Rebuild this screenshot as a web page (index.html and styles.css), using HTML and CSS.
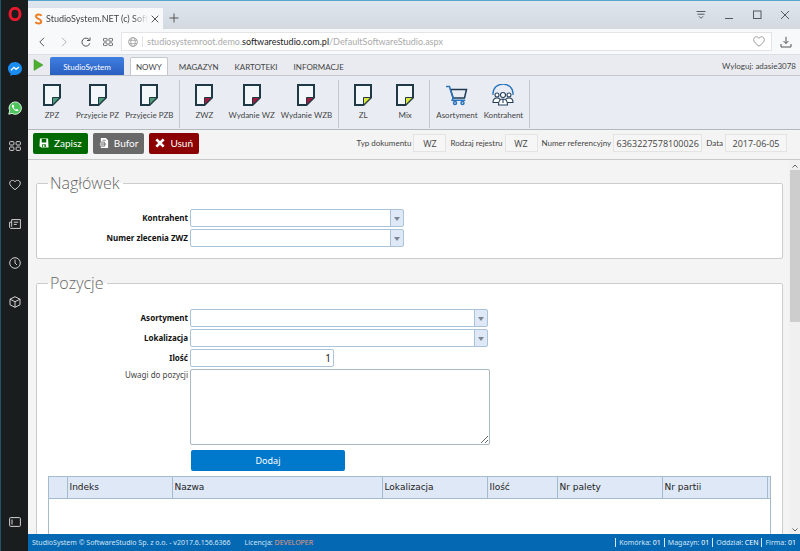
FILE: index.html
```
<!DOCTYPE html>
<html lang="pl">
<head>
    <meta charset="UTF-8">
    <meta name="viewport" content="width=device-width, initial-scale=1.0">
    <title>StudioSystem.NET (c) SoftwareStudio</title>
    <link rel="stylesheet" href="styles.css">
</head>
<body>
    <!-- Shared icon shapes -->
    <svg class="symbols" aria-hidden="true">
        <symbol id="doc" viewBox="0 0 18 22">
            <path class="doc-page" d="M1 1h16v12.500l-7.500 7.500H1z"/>
            <path class="doc-fold" d="M9.500 21v-7.500H17z"/>
        </symbol>
        <symbol id="tiles" viewBox="0 0 12 10">
            <rect x="0.6" y="0.6" width="4.3" height="3.4" rx="0.8"/>
            <rect x="7.1" y="0.6" width="4.3" height="3.4" rx="0.8"/>
            <rect x="0.6" y="6" width="4.3" height="3.4" rx="0.8"/>
            <rect x="7.1" y="6" width="4.3" height="3.4" rx="0.8"/>
        </symbol>
        <symbol id="heart" viewBox="0 0 12 11">
            <path d="M6 10.2C3 7.8.7 6 .7 3.7.7 2 1.900.8 3.400.8 4.500.8 5.500 1.400 6 2.300 6.500 1.400 7.500.8 8.600.8c1.500 0 2.700 1.200 2.700 2.900C11.300 6 9 7.800 6 10.200z"/>
        </symbol>
    </svg>

    <aside class="sidebar">
        <svg class="opera" viewBox="0 0 14 14"><ellipse cx="7" cy="7" rx="5" ry="5.700"/></svg>
        <svg class="messenger" viewBox="0 0 14 14"><path fill="#1a8df5" d="M7 0C3 0 0 2.900 0 6.600c0 2.100 1 3.900 2.500 5.100V14l2.200-1.200c.7.2 1.500.3 2.300.3 4 0 7-2.900 7-6.500S11 0 7 0z"/><path fill="none" stroke="#fff" stroke-width="1.300" d="M3 8.300l3-3 2 2 3-2.400"/></svg>
        <svg class="whatsapp" viewBox="0 0 14 14"><path fill="#4cc35b" stroke="#d9f2dc" stroke-width="1" d="M.8 13.200l.9-3.300A6.200 6.200 0 1 1 4 12.400z"/><path fill="#fff" d="M4.700 3.600c-1.200.8-1 2.700.9 4.700 2 2 3.900 2.500 4.800 1.300.4-.6.200-.9-1.600-1.700-.5 0-.6.800-1.100.7-.9-.3-1.900-1.300-2.100-2.100 0-.4.600-.6.600-1.100-.5-1.400-.9-2.100-1.500-1.800z"/></svg>
        <svg class="line-icon" viewBox="0 0 12 10"><use href="#tiles"/></svg>
        <svg class="line-icon" viewBox="0 0 12 11"><use href="#heart"/></svg>
        <svg class="line-icon" viewBox="0 0 12 10"><path d="M2.700.6h8.700v8.800H1.500L.6 8.500V3.200h2.100zM2.700 3.200v4.600M4.800 3.200h4.500M4.800 5.400h3"/></svg>
        <svg class="line-icon" viewBox="0 0 12 12"><circle cx="6" cy="6" r="5.300"/><path d="M6 2.600V6l2 2"/></svg>
        <svg class="line-icon" viewBox="0 0 12 12"><path d="M6 .7l5 2.500v5.600l-5 2.500-5-2.500V3.200zM1 3.200l5 2.500 5-2.500M6 5.700v5.600"/></svg>
        <svg class="line-icon panel-icon" viewBox="0 0 12 10"><rect x="0.600" y="0.600" width="10.800" height="8.800" rx="1"/><path d="M3 2.500v5"/></svg>
    </aside>

    <div class="window">
        <header class="tab-strip">
            <div class="browser-tab">
                <svg class="favicon" viewBox="0 0 8 12"><path d="M7 2.800C6 1 1.500.9 1.500 3.500S6.700 5.800 6.700 8.500 2 10.900 1 9"/></svg>
                <span class="tab-title">StudioSystem.NET (c) Soft</span>
                <svg class="tab-close" viewBox="0 0 8 8"><path d="M.7.700l6.600 6.600M7.300.7L.7 7.300"/></svg>
            </div>
            <svg class="new-tab" viewBox="0 0 10 10"><path d="M5 .5v9M.5 5h9"/></svg>
            <div class="window-controls">
                <svg viewBox="0 0 10 10"><path d="M.5 1.500h9M1.500 4.200h7M3 6.300l2 2 2-2"/></svg>
                <svg viewBox="0 0 10 10"><path d="M1 8.500h8"/></svg>
                <svg viewBox="0 0 10 10"><rect x="1.500" y="1" width="7.500" height="7.500"/></svg>
                <svg viewBox="0 0 10 10"><path d="M1 1l8 8M9 1L1 9"/></svg>
            </div>
        </header>

        <div class="address-row">
            <svg class="nav-icon" viewBox="0 0 10 10"><path d="M7 .8L2.800 5 7 9.200"/></svg>
            <svg class="nav-icon disabled" viewBox="0 0 10 10"><path d="M3 .8L7.200 5 3 9.200"/></svg>
            <svg class="nav-icon" viewBox="0 0 10 10"><path d="M8.800 6.200a4 4 0 1 1-.6-3.400M9 .5v3H6"/></svg>
            <svg class="nav-icon" viewBox="0 0 12 10"><use href="#tiles"/></svg>
            <div class="address-box">
                <svg class="globe" viewBox="0 0 10 10"><circle cx="5" cy="5" r="4.400"/><ellipse cx="5" cy="5" rx="2.200" ry="4.400"/><path d="M1 3.300h8M1 6.700h8"/></svg>
                <span class="url">studiosystemroot.demo.<b>softwarestudio.com.pl</b>/DefaultSoftwareStudio.aspx</span>
                <svg class="bookmark" viewBox="0 0 12 11"><use href="#heart"/></svg>
            </div>
            <svg class="nav-icon download" viewBox="0 0 12 12"><path d="M6 .8v6.700M3.500 5L6 7.500 8.500 5M1 8v3h10V8"/></svg>
        </div>

        <nav class="menu">
            <svg class="play" viewBox="0 0 10 12"><path d="M.5.500l9 5.500-9 5.500z"/></svg>
            <a class="home" href="#">StudioSystem</a>
            <a class="active" href="#">NOWY</a>
            <a href="#">MAGAZYN</a>
            <a href="#">KARTOTEKI</a>
            <a href="#">INFORMACJE</a>
            <a class="logout" href="#">Wyloguj: adasie3078</a>
        </nav>

        <div class="ribbon">
            <div class="ribbon-group">
                <button class="green"><svg><use href="#doc"/></svg>ZPZ</button>
                <button class="green"><svg><use href="#doc"/></svg>Przyjęcie PZ</button>
                <button class="green"><svg><use href="#doc"/></svg>Przyjęcie PZB</button>
            </div>
            <div class="ribbon-group">
                <button class="red"><svg><use href="#doc"/></svg>ZWZ</button>
                <button class="red"><svg><use href="#doc"/></svg>Wydanie WZ</button>
                <button class="red"><svg><use href="#doc"/></svg>Wydanie WZB</button>
            </div>
            <div class="ribbon-group">
                <button class="yellow"><svg><use href="#doc"/></svg>ZL</button>
                <button class="yellow"><svg><use href="#doc"/></svg>Mix</button>
            </div>
            <div class="ribbon-group">
                <button>
                    <svg viewBox="0 0 22 22"><g fill="none" stroke-width="1.500"><path stroke="#1c3a56" d="M4.500 5.500h16l-2 8.500H7.200z"/><path stroke="#2a74bd" d="M0 2.500h3.500L7 14l-.8 2.300h13"/><circle stroke="#2a74bd" cx="9" cy="19" r="1.500"/><circle stroke="#2a74bd" cx="16.500" cy="19" r="1.500"/></g></svg>
                    Asortyment
                </button>
                <button>
                    <svg viewBox="0 0 22 22"><path fill="none" stroke="#2a74bd" stroke-width="1.300" d="M1 11C0-3.500 22-3.500 21 11"/><g fill="#fff" stroke="#26405a" stroke-width="1.100"><circle cx="5" cy="11" r="2"/><circle cx="17" cy="11" r="2"/><path d="M1 18.500c0-3 1.500-4.500 4-4.500s4 1.500 4 4.500zM13 18.500c0-3 1.500-4.500 4-4.500s4 1.500 4 4.500z"/><circle cx="11" cy="11" r="2.500"/><path d="M6.500 21c0-4 1.500-6 4.500-6s4.500 2 4.500 6zM11 15v4"/></g></svg>
                    Kontrahent
                </button>
            </div>
        </div>

        <form class="document">
            <div class="toolbar">
                <button type="button" class="save"><svg viewBox="0 0 11 11"><path fill="#fff" fill-rule="evenodd" d="M1 .500h9l.5 10h-8L.500 9zM3 1v4h5V1zM3.500 7v3h4V7z"/><path fill="#fff" d="M4.500 7.500H6V10H4.500z"/></svg>Zapisz</button>
                <button type="button" class="buffer"><svg viewBox="0 0 11 11"><path fill="#fff" d="M2 0h5.500L10 2.500V11H2z"/><path fill="#ddd" stroke="#666" stroke-width=".8" d="M.8 4.500h5.500v4.500H.8z"/><path stroke="#666" stroke-width=".8" d="M4 2.500h3.500M2 6.700h6"/></svg>Bufor</button>
                <button type="button" class="delete"><svg viewBox="0 0 11 11"><path stroke="#fff" stroke-width="3" d="M1.500 1.500l8 8M9.500 1.500l-8 8"/></svg>Usuń</button>
                <div class="doc-info">
                    <label for="docType">Typ dokumentu</label>
                    <input id="docType" class="short" value="WZ" readonly>
                    <label for="registerType">Rodzaj rejestru</label>
                    <input id="registerType" class="short" value="WZ" readonly>
                    <label for="refNumber">Numer referencyjny</label>
                    <input id="refNumber" class="long" value="6363227578100026" readonly>
                    <label for="docDate">Data</label>
                    <input id="docDate" class="date" value="2017-06-05" readonly>
                </div>
            </div>

            <div class="scroll-area">
                <div class="content">
                    <fieldset>
                        <legend>Nagłówek</legend>
                        <div class="form-grid">
                            <label for="contractor">Kontrahent</label>
                            <div class="combo medium"><select id="contractor"><option></option></select></div>
                            <label for="orderNumber">Numer zlecenia ZWZ</label>
                            <div class="combo medium"><select id="orderNumber"><option></option></select></div>
                        </div>
                    </fieldset>

                    <fieldset>
                        <legend>Pozycje</legend>
                        <div class="form-grid">
                            <label for="product">Asortyment</label>
                            <div class="combo wide"><select id="product"><option></option></select></div>
                            <label for="location">Lokalizacja</label>
                            <div class="combo wide"><select id="location"><option></option></select></div>
                            <label for="quantity">Ilość</label>
                            <input id="quantity" class="quantity" value="1">
                            <label for="notes" class="optional">Uwagi do pozycji</label>
                            <textarea id="notes"></textarea>
                            <button type="button" class="add">Dodaj</button>
                        </div>

                        <!-- Document lines -->
                        <div class="table-wrap">
                            <table>
                                <colgroup>
                                    <col class="col-select"><col class="col-normal"><col class="col-name"><col class="col-normal"><col class="col-qty"><col class="col-normal"><col class="col-normal"><col>
                                </colgroup>
                                <thead>
                                    <tr><th></th><th>Indeks</th><th>Nazwa</th><th>Lokalizacja</th><th>Ilość</th><th>Nr palety</th><th>Nr partii</th><th></th></tr>
                                </thead>
                            </table>
                        </div>
                    </fieldset>
                </div>
                <div class="scrollbar">
                    <svg viewBox="0 0 8 6"><path d="M1.500 4.500L4 2l2.500 2.500"/></svg>
                    <div class="thumb"></div>
                    <svg class="down" viewBox="0 0 8 6"><path d="M1.500 1.500L4 4l2.500-2.500"/></svg>
                </div>
            </div>
        </form>

        <footer class="status">
            <span>StudioSystem © SoftwareStudio Sp. z o.o. - v2017.6.156.6366</span>
            <span>Licencja: <em>DEVELOPER</em></span>
            <ul>
                <li>Komórka: <b>01</b></li>
                <li>Magazyn: <b>01</b></li>
                <li>Oddział: <b>CEN</b></li>
                <li>Firma: <b>01</b></li>
            </ul>
        </footer>
    </div>
</body>
</html>
```
FILE: styles.css
```
* {
    margin: 0;
    padding: 0;
    box-sizing: border-box;
}
body {
    display: flex;
    height: 100vh;
    overflow: hidden;
    font-family: Lato, "Open Sans", sans-serif;
    font-size: 8px;
    color: #444;
    background-color: #f4f4f4;
}
svg {
    display: block;
    flex: none;
    fill: none;
}
a {
    color: inherit;
    text-decoration: none;
}
button,
input,
select,
textarea {
    font-family: inherit;
    color: inherit;
}
.symbols {
    position: absolute;
    width: 0;
    height: 0;
}

/* Browser sidebar */
.sidebar {
    flex: none;
    width: 28px;
    display: flex;
    flex-direction: column;
    align-items: center;
    gap: 27px;
    padding: 7px 0 23px;
    background-color: #1a1d1e;
    border-left: 1px solid #23546b;
}
.sidebar svg {
    width: 12px;
    height: 12px;
}
.sidebar .opera {
    width: 14px;
    height: 14px;
    margin-bottom: 14px;
    stroke: #e8182d;
    stroke-width: 3;
}
.sidebar .messenger,
.sidebar .whatsapp {
    width: 14px;
    height: 14px;
    margin-bottom: -2px;
}
.line-icon {
    stroke: #d0d2d3;
    stroke-width: 1;
}
.sidebar .panel-icon {
    margin-top: auto;
}

/* Browser window */
.window {
    flex: 1;
    min-width: 0;
    display: flex;
    flex-direction: column;
    border-top: 1px solid #5aa5cc;
}
.tab-strip {
    flex: none;
    display: flex;
    align-items: flex-end;
    height: 28px;
    padding-right: 10px;
    background: linear-gradient(#dfe6ef, #d3d9df);
}
.browser-tab {
    display: flex;
    align-items: center;
    gap: 3px;
    width: 135px;
    height: 21px;
    padding: 0 6px;
    background-color: #f8f9fb;
}
.favicon {
    width: 9px;
    height: 12px;
    stroke: #ee7d22;
    stroke-width: 2;
}
.tab-title {
    flex: 1;
    white-space: nowrap;
    font-size: 9px;
    mask-image: linear-gradient(to right, #000 85%, transparent);
}
.tab-close {
    width: 8px;
    height: 8px;
    stroke: #555;
}
.new-tab {
    width: 10px;
    height: 10px;
    margin: 0 0 6px 6px;
    stroke: #555;
}
.window-controls {
    display: flex;
    gap: 18px;
    margin: 0 0 9px auto;
    stroke: #555b63;
}
.window-controls svg {
    width: 10px;
    height: 10px;
}
.address-row {
    flex: none;
    display: flex;
    align-items: center;
    gap: 12px;
    height: 26px;
    padding: 0 8px 0 9px;
    background-color: #f8f9fb;
    border-bottom: 1px solid #dcdfe3;
}
.nav-icon {
    width: 10px;
    height: 10px;
    stroke: #555;
}
.nav-icon.disabled {
    stroke: #b5b5b5;
}
.nav-icon.download {
    width: 12px;
    height: 12px;
    margin-left: -4px;
}
.address-box {
    flex: 1;
    display: flex;
    align-items: center;
    height: 19px;
    margin-left: -4px;
    padding: 0 6px;
    background-color: #fff;
    border: 1px solid #e2e4e8;
}
.globe {
    width: 10px;
    height: 10px;
    stroke: #999;
    stroke-width: 0.8;
}
.url {
    margin-left: 4px;
    padding-left: 4px;
    border-left: 1px solid #e2e4e8;
    font-size: 9px;
    color: #aaa;
}
.url b {
    font-weight: normal;
    color: #222;
}
.bookmark {
    width: 12px;
    height: 11px;
    margin-left: auto;
    stroke: #999;
}

/* Application menu */
.menu {
    flex: none;
    display: flex;
    align-items: flex-end;
    gap: 6px;
    height: 21px;
    padding: 0 4px 0 5px;
    background-color: #e9ebf0;
    border-bottom: 1px solid #c4c7cb;
}
.menu a {
    height: 18px;
    padding: 0 5px;
    line-height: 20px;
}
.play {
    width: 11px;
    height: 12px;
    margin-bottom: 4px;
    fill: #4bb02e;
    stroke: #3a8f24;
    stroke-width: 0.5;
}
.menu .home {
    width: 74px;
    text-align: center;
    color: #fff;
    background: linear-gradient(#3f7fe0, #2a5fc0);
    border-radius: 2px 2px 0 0;
}
.menu .active {
    line-height: 18px;
    background-color: #fff;
    border: 1px solid #c4c7cb;
    border-bottom: none;
    border-radius: 2px 2px 0 0;
}
.menu .logout {
    margin-left: auto;
    padding: 0;
    line-height: 18px;
}

/* Ribbon */
.ribbon {
    flex: none;
    display: flex;
    height: 54px;
    padding: 4px 0 1px;
    background-color: #e9edf3;
    border-bottom: 1px solid #b5b8bc;
}
.ribbon-group {
    display: flex;
    gap: 2px;
    padding: 0 4px;
    border-right: 1px solid #c4c7cb;
}
.ribbon button {
    display: flex;
    flex-direction: column;
    align-items: center;
    gap: 3px;
    min-width: 40px;
    padding: 4px 2px;
    font-size: 8px;
    line-height: 12px;
    white-space: nowrap;
    background: none;
    border: none;
}
.ribbon svg {
    width: 22px;
    height: 22px;
}
.doc-page {
    fill: #f4f7fa;
    stroke: #1f3a44;
    stroke-width: 2;
}
.doc-fold {
    fill: currentColor;
    stroke: #1f3a44;
    stroke-width: 1;
}
.green use {
    color: #4f9b7b;
}
.red use {
    color: #a5193f;
}
.yellow use {
    color: #dfe63c;
}

/* Document form */
.document {
    flex: 1;
    min-height: 0;
    display: flex;
    flex-direction: column;
}
.toolbar {
    flex: none;
    display: flex;
    align-items: center;
    gap: 5px;
    height: 30px;
    padding: 0 13px 3px 5px;
    border-bottom: 1px solid #c8c8c8;
}
.toolbar button {
    display: flex;
    align-items: center;
    gap: 5px;
    height: 21px;
    padding: 0 6px;
    font-size: 10px;
    color: #fff;
    border: none;
    border-radius: 2px;
}
.toolbar button svg {
    width: 10px;
    height: 10px;
}
.toolbar .save {
    background-color: #006a00;
}
.toolbar .buffer {
    background-color: #696969;
}
.toolbar .delete {
    background-color: #8b0000;
}
.doc-info {
    display: flex;
    align-items: center;
    gap: 2px;
    margin-left: auto;
}
.doc-info input {
    height: 18px;
    margin-right: 2px;
    font-family: "Open Sans", sans-serif;
    font-size: 9px;
    text-align: center;
    background-color: #f6f6f6;
    border: 1px solid #e4e4e4;
}
.doc-info input:last-child {
    margin-right: 0;
}
.doc-info .short {
    width: 33px;
}
.doc-info .long {
    width: 89px;
}
.doc-info .date {
    width: 62px;
}
.scroll-area {
    flex: 1;
    min-height: 0;
    display: flex;
}
.content {
    flex: 1;
    min-width: 0;
    padding: 11px 6px 0 8px;
    overflow: hidden;
}
fieldset {
    margin-bottom: 12px;
    padding: 14px 11px 11px;
    background-color: #fff;
    border: 1px solid #ccc;
    border-radius: 2px;
}
fieldset:last-child {
    height: 400px;
}
legend {
    padding: 0 4px 0 2px;
    font-family: "Open Sans", sans-serif;
    font-size: 16px;
    font-weight: 300;
    line-height: 24px;
    color: #666;
}
.form-grid {
    display: grid;
    grid-template-columns: 140px 1fr;
    gap: 2px;
    justify-items: start;
    font-family: "Noto Sans", sans-serif;
}
.form-grid label {
    justify-self: end;
    font-weight: bold;
    line-height: 18px;
    color: #111;
}
.form-grid .optional {
    font-weight: normal;
    line-height: 12px;
    color: #444;
}
.combo {
    position: relative;
    height: 18px;
}
.combo.medium {
    width: 214px;
}
.combo.wide {
    width: 298px;
}
.combo select {
    width: 100%;
    height: 100%;
    appearance: none;
    background: linear-gradient(to left, #dfe8f6 12px, #a9c3d8 12px, #a9c3d8 13px, #fff 13px);
    border: 1px solid #a9c3d8;
    border-radius: 2px;
}
.combo::after {
    content: "";
    position: absolute;
    right: 4px;
    top: 8px;
    border: 3px solid transparent;
    border-top: 4px solid #7b8794;
    border-bottom: none;
    pointer-events: none;
}
.quantity {
    width: 144px;
    height: 18px;
    padding: 0 2px;
    font-size: 10px;
    text-align: right;
    color: #222;
    border: 1px solid #a9c3d8;
    border-radius: 2px;
}
textarea {
    width: 300px;
    height: 76px;
    border: 1px solid #a9b9c4;
    border-radius: 2px;
}
.add {
    grid-column: 2;
    width: 154px;
    height: 21px;
    margin: 3px 0 0 1px;
    font-size: 9px;
    color: #fff;
    background-color: #0078cc;
    border: none;
    border-radius: 2px;
}
.table-wrap {
    height: 200px;
    margin-top: 5px;
    border: 1px solid #a3bbcd;
}
table {
    width: 100%;
    table-layout: fixed;
    border-collapse: collapse;
    font-family: "DejaVu Sans", sans-serif;
    font-size: 9px;
    color: #222;
}
th {
    height: 21px;
    padding: 0 2px;
    font-weight: normal;
    text-align: left;
    background-color: #dfe8f6;
    border-right: 1px solid #a3bbcd;
    border-bottom: 1px solid #a3bbcd;
}
th:last-child {
    border-right: none;
}
.col-select {
    width: 18px;
}
.col-normal {
    width: 105px;
}
.col-name {
    width: 210px;
}
.col-qty {
    width: 70px;
}
.scrollbar {
    flex: none;
    width: 11px;
    display: flex;
    flex-direction: column;
    align-items: center;
    padding-top: 2px;
    background-color: #f0f0f0;
}
.scrollbar svg {
    width: 8px;
    height: 8px;
    stroke: #666;
}
.thumb {
    width: 10px;
    height: 152px;
    background-color: #cdcdcd;
}
.scrollbar .down {
    margin-top: auto;
}

/* Status bar */
.status {
    flex: none;
    display: flex;
    align-items: center;
    gap: 14px;
    height: 17px;
    padding: 0 4px;
    font-family: "Noto Sans", sans-serif;
    font-size: 7px;
    color: #d5e6f4;
    background-color: #0468b3;
}
.status em {
    font-style: normal;
    color: #e29a80;
}
.status ul {
    display: flex;
    gap: 3px;
    margin-left: auto;
    list-style: none;
}
.status li {
    padding-left: 3px;
    line-height: 9px;
    border-left: 1px solid #d5e6f4;
}
.status b {
    font-weight: normal;
    color: #fff;
}
```
